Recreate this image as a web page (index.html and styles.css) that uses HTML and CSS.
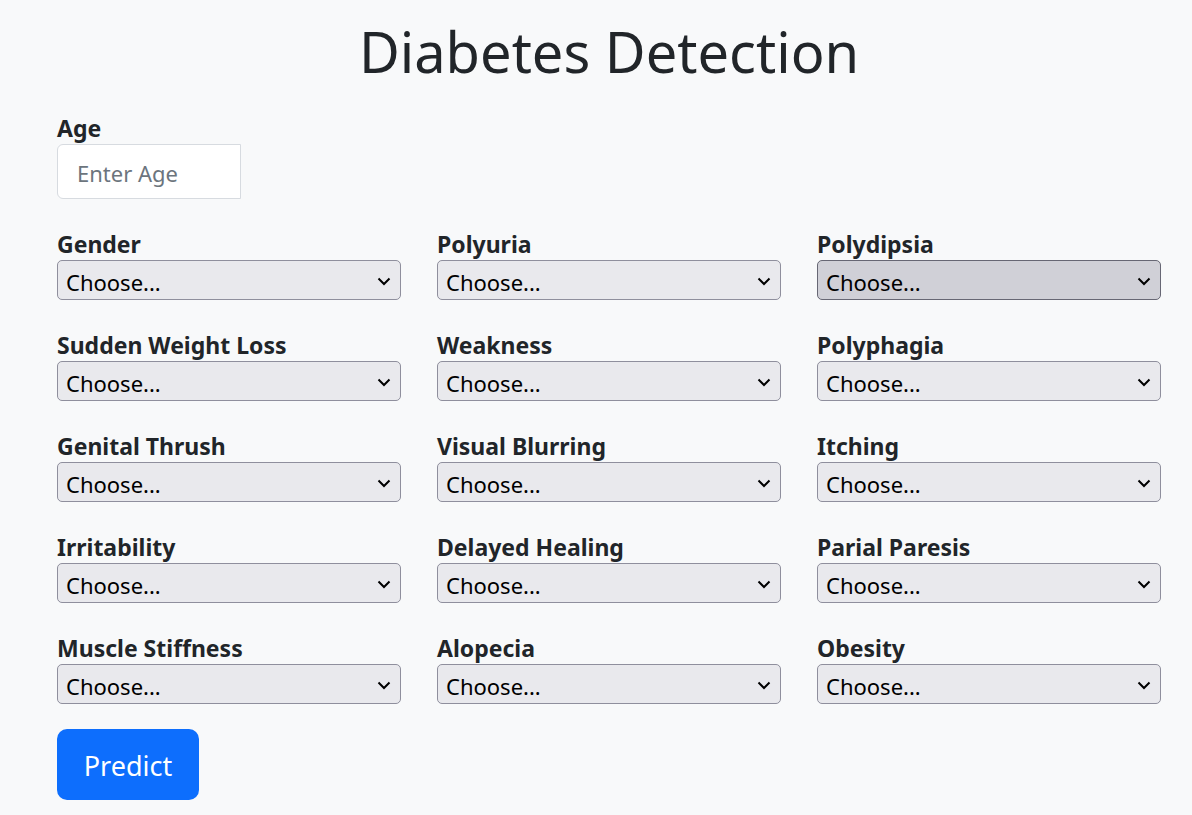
FILE: index.html
```html
<!DOCTYPE html>
<html lang="en">
<head>
<meta charset="utf-8">
<title>Diabetes Detection</title>
<link rel="stylesheet" href="styles.css">
</head>
<body>
<main class="page">
  <h1 class="title">Diabetes Detection</h1>
  <form class="form">
    <div class="field age">
      <label class="label" for="age">Age</label>
      <input class="age-input" id="age" type="text" placeholder="Enter Age">
    </div>
    <div class="grid">
      <div class="field"><label class="label">Gender</label><div class="sel"><select><option>Choose...</option></select><svg class="chev" width="14" height="9" viewBox="0 0 14 9"><path d="M1.5 1.5 L7 7 L12.5 1.5" fill="none" stroke="#000" stroke-width="2"/></svg></div></div>
      <div class="field"><label class="label">Polyuria</label><div class="sel"><select><option>Choose...</option></select><svg class="chev" width="14" height="9" viewBox="0 0 14 9"><path d="M1.5 1.5 L7 7 L12.5 1.5" fill="none" stroke="#000" stroke-width="2"/></svg></div></div>
      <div class="field"><label class="label">Polydipsia</label><div class="sel hover"><select><option>Choose...</option></select><svg class="chev" width="14" height="9" viewBox="0 0 14 9"><path d="M1.5 1.5 L7 7 L12.5 1.5" fill="none" stroke="#000" stroke-width="2"/></svg></div></div>
      <div class="field"><label class="label">Sudden Weight Loss</label><div class="sel"><select><option>Choose...</option></select><svg class="chev" width="14" height="9" viewBox="0 0 14 9"><path d="M1.5 1.5 L7 7 L12.5 1.5" fill="none" stroke="#000" stroke-width="2"/></svg></div></div>
      <div class="field"><label class="label">Weakness</label><div class="sel"><select><option>Choose...</option></select><svg class="chev" width="14" height="9" viewBox="0 0 14 9"><path d="M1.5 1.5 L7 7 L12.5 1.5" fill="none" stroke="#000" stroke-width="2"/></svg></div></div>
      <div class="field"><label class="label">Polyphagia</label><div class="sel"><select><option>Choose...</option></select><svg class="chev" width="14" height="9" viewBox="0 0 14 9"><path d="M1.5 1.5 L7 7 L12.5 1.5" fill="none" stroke="#000" stroke-width="2"/></svg></div></div>
      <div class="field"><label class="label">Genital Thrush</label><div class="sel"><select><option>Choose...</option></select><svg class="chev" width="14" height="9" viewBox="0 0 14 9"><path d="M1.5 1.5 L7 7 L12.5 1.5" fill="none" stroke="#000" stroke-width="2"/></svg></div></div>
      <div class="field"><label class="label">Visual Blurring</label><div class="sel"><select><option>Choose...</option></select><svg class="chev" width="14" height="9" viewBox="0 0 14 9"><path d="M1.5 1.5 L7 7 L12.5 1.5" fill="none" stroke="#000" stroke-width="2"/></svg></div></div>
      <div class="field"><label class="label">Itching</label><div class="sel"><select><option>Choose...</option></select><svg class="chev" width="14" height="9" viewBox="0 0 14 9"><path d="M1.5 1.5 L7 7 L12.5 1.5" fill="none" stroke="#000" stroke-width="2"/></svg></div></div>
      <div class="field"><label class="label">Irritability</label><div class="sel"><select><option>Choose...</option></select><svg class="chev" width="14" height="9" viewBox="0 0 14 9"><path d="M1.5 1.5 L7 7 L12.5 1.5" fill="none" stroke="#000" stroke-width="2"/></svg></div></div>
      <div class="field"><label class="label">Delayed Healing</label><div class="sel"><select><option>Choose...</option></select><svg class="chev" width="14" height="9" viewBox="0 0 14 9"><path d="M1.5 1.5 L7 7 L12.5 1.5" fill="none" stroke="#000" stroke-width="2"/></svg></div></div>
      <div class="field"><label class="label">Parial Paresis</label><div class="sel"><select><option>Choose...</option></select><svg class="chev" width="14" height="9" viewBox="0 0 14 9"><path d="M1.5 1.5 L7 7 L12.5 1.5" fill="none" stroke="#000" stroke-width="2"/></svg></div></div>
      <div class="field"><label class="label">Muscle Stiffness</label><div class="sel"><select><option>Choose...</option></select><svg class="chev" width="14" height="9" viewBox="0 0 14 9"><path d="M1.5 1.5 L7 7 L12.5 1.5" fill="none" stroke="#000" stroke-width="2"/></svg></div></div>
      <div class="field"><label class="label">Alopecia</label><div class="sel"><select><option>Choose...</option></select><svg class="chev" width="14" height="9" viewBox="0 0 14 9"><path d="M1.5 1.5 L7 7 L12.5 1.5" fill="none" stroke="#000" stroke-width="2"/></svg></div></div>
      <div class="field"><label class="label">Obesity</label><div class="sel"><select><option>Choose...</option></select><svg class="chev" width="14" height="9" viewBox="0 0 14 9"><path d="M1.5 1.5 L7 7 L12.5 1.5" fill="none" stroke="#000" stroke-width="2"/></svg></div></div>
    </div>
    <button class="predict" type="button">Predict</button>
  </form>
</main>
</body>
</html>
```

FILE: styles.css
```css
html, body {
  margin: 0;
  padding: 0;
  background: #f8f9fa;
}
body {
  font-family: "Noto Sans", "Open Sans", sans-serif;
  color: #212529;
  width: 1192px;
  height: 815px;
  overflow: hidden;
}
.page {
  padding-left: 57px;
  width: 1104px;
}
.title {
  margin: 18px 0 0 0;
  font-size: 56px;
  line-height: 67px;
  font-weight: 400;
  text-align: center;
  color: #212529;
}
.form {
  display: flex;
  flex-direction: column;
  align-items: flex-start;
  margin-top: 29px;
}
.field {
  display: flex;
  flex-direction: column;
}
.label {
  display: block;
  font-size: 23px;
  line-height: 26px;
  font-weight: 700;
  color: #212529;
  padding-top: 1px;
  margin-bottom: 3px;
}
.age-input {
  box-sizing: border-box;
  width: 184px;
  height: 55px;
  border: 1px solid #d7dbe0;
  border-radius: 6px 0 0 6px;
  background: #fff;
  padding: 2px 0 0 19px;
  font-family: "Noto Sans", "Open Sans", sans-serif;
  font-size: 22px;
  color: #212529;
  outline: none;
}
.age-input::placeholder {
  color: #6c757d;
  opacity: 1;
}
.grid {
  margin-top: 31px;
  width: 1104px;
  display: grid;
  grid-template-columns: repeat(3, 344px);
  column-gap: 36px;
  row-gap: 31px;
}
.sel {
  position: relative;
  width: 344px;
  height: 40px;
}
.sel select {
  appearance: none;
  -webkit-appearance: none;
  box-sizing: border-box;
  width: 100%;
  height: 40px;
  margin: 0;
  padding: 3px 36px 0 8px;
  border: 1px solid #8f8f9d;
  border-radius: 5px;
  background: #e9e9ed;
  font-family: "Noto Sans", "Open Sans", sans-serif;
  font-size: 22px;
  color: #000;
  outline: none;
}
.sel.hover select {
  background: #d0d0d7;
  border-color: #676774;
}
.chev {
  position: absolute;
  right: 10px;
  top: 17px;
  pointer-events: none;
}
.predict {
  margin-top: 25px;
  width: 142px;
  height: 71px;
  border: none;
  border-radius: 10px;
  background: #0d6efd;
  color: #fff;
  font-family: "Noto Sans", "Open Sans", sans-serif;
  font-size: 27px;
  padding: 2px 0 0 0;
  cursor: pointer;
}
```
